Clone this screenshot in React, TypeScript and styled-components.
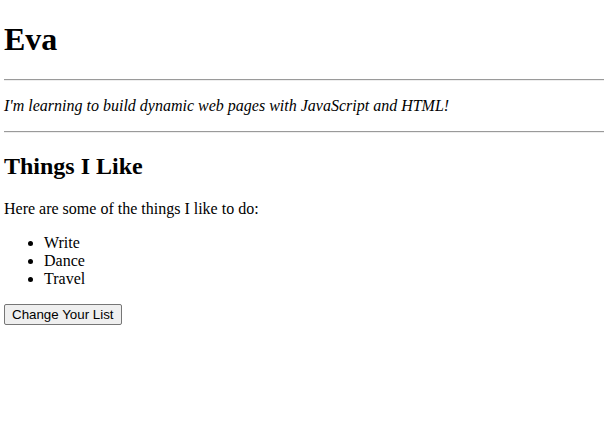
import React from "react";
import styled, { createGlobalStyle } from "styled-components";

const Global = createGlobalStyle`
  html, body { margin: 0; padding: 0; background: #fff; }
  body { font-family: "Liberation Serif", "Times New Roman", serif; font-size: 16px; color: #000; }
`;

const Page = styled.div`
  padding: 0 0 0 4px;
  display: flow-root;
`;

const Title = styled.h1`
  font-size: 32px;
  font-weight: bold;
  margin: 21px 0 21px;
`;

const Rule = styled.hr`
  margin: 8px 0;
  border: none;
  border-top: 1px solid #9a9a9a;
  border-bottom: 1px solid #eee;
  height: 0;
`;

const Tagline = styled.p`
  font-style: italic;
  margin: 16px 0;
`;

const Heading = styled.h2`
  font-size: 24px;
  font-weight: bold;
  margin: 20px 0;
`;

const Para = styled.p`
  margin: 16px 0;
`;

const List = styled.ul`
  margin: 16px 0;
  padding-left: 40px;
`;

const Button = styled.button`
  font-family: "Liberation Sans", Arial, sans-serif;
  font-size: 13.33px;
  padding: 2px 7px;
  border: 1px solid #767676;
  border-radius: 2px;
  background: #efefef;
  color: #000;
`;

export default function App() {
  return (
    <>
      <Global />
      <Page>
        <Title>Eva</Title>
        <Rule />
        <Tagline>I'm learning to build dynamic web pages with JavaScript and HTML!</Tagline>
        <Rule />
        <Heading>Things I Like</Heading>
        <Para>Here are some of the things I like to do:</Para>
        <List>
          <li>Write</li>
          <li>Dance</li>
          <li>Travel</li>
        </List>
        <Button>Change Your List</Button>
      </Page>
    </>
  );
}
